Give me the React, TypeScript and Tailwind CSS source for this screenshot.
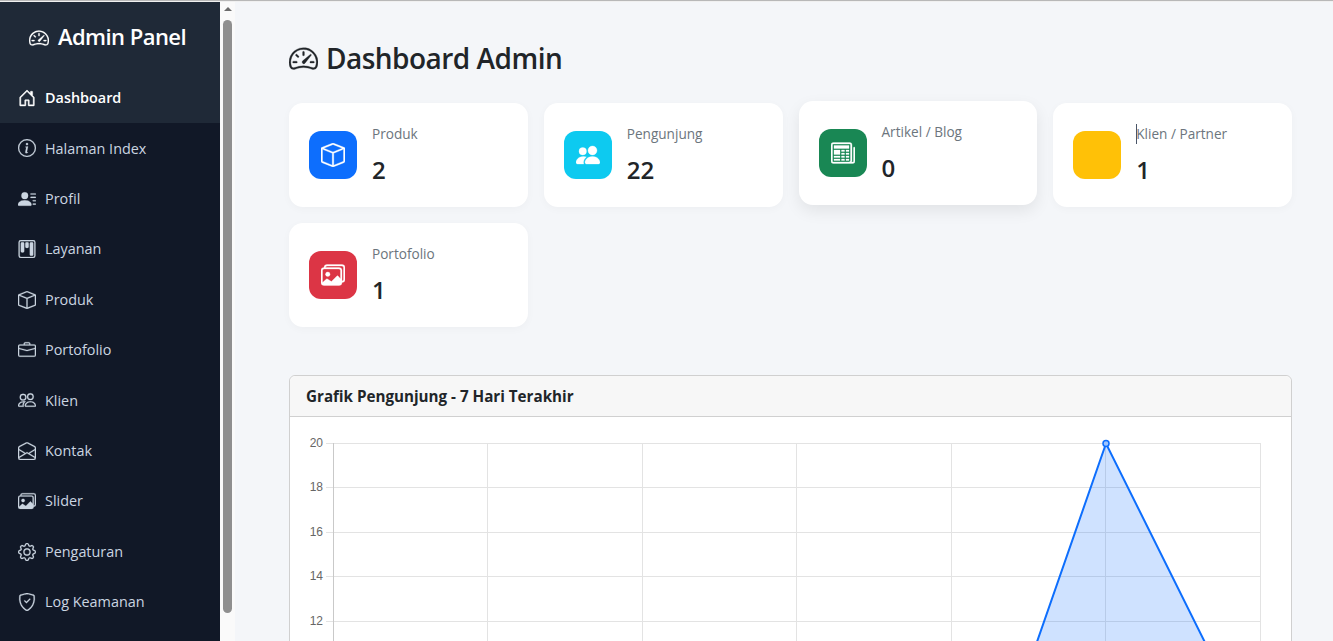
import type { IconType } from "react-icons";
import {
  BsSpeedometer2, BsHouseDoor, BsInfoCircle, BsPersonLinesFill, BsKanban, BsBox,
  BsBriefcase, BsPeople, BsEnvelopeOpen, BsImages, BsGear, BsShieldCheck,
  BsPeopleFill, BsNewspaper,
} from "react-icons/bs";

const menu: { label: string; icon: IconType; active?: boolean }[] = [
  { label: "Dashboard", icon: BsHouseDoor, active: true },
  { label: "Halaman Index", icon: BsInfoCircle },
  { label: "Profil", icon: BsPersonLinesFill },
  { label: "Layanan", icon: BsKanban },
  { label: "Produk", icon: BsBox },
  { label: "Portofolio", icon: BsBriefcase },
  { label: "Klien", icon: BsPeople },
  { label: "Kontak", icon: BsEnvelopeOpen },
  { label: "Slider", icon: BsImages },
  { label: "Pengaturan", icon: BsGear },
  { label: "Log Keamanan", icon: BsShieldCheck },
];

function Sidebar() {
  return (
    <aside className="w-[220px] shrink-0 bg-[#111827] text-[#cbd5e1]">
      <div className="h-[71px] bg-[#1f2937] flex items-start justify-center pt-[19px] pr-[5px] gap-[9px] text-white">
        <BsSpeedometer2 className="w-[20px] h-[20px] mt-[7px] [stroke-width:0.2]" />
        <span className="text-[22px] font-semibold leading-[30px] tracking-[-0.55px]">Admin Panel</span>
      </div>
      {menu.map((item) => (
        <div
          key={item.label}
          className={
            item.active
              ? "h-[50.4px] flex items-center gap-[9px] pl-[18px] pb-[0.2px] bg-[#1f2937] text-white font-semibold text-[14.4px]"
              : "h-[50.4px] flex items-center gap-[9px] pl-[18px] pb-[0.2px] text-[14.4px]"
          }
        >
          <item.icon className={item.active ? "w-[18px] h-[18px] shrink-0 [stroke-width:0.4]" : "w-[18px] h-[18px] shrink-0 [stroke-width:0.2]"} />
          <span>{item.label}</span>
        </div>
      ))}
    </aside>
  );
}

function Scrollbar() {
  return (
    <div className="w-[15px] shrink-0 bg-[#fafafa] flex flex-col items-center pt-[5px]">
      <div className="w-0 h-0 border-x-[4px] border-x-transparent border-b-[4px] border-b-[#6b6b6b]" />
      <div className="w-[9px] h-[593px] mt-[9px] rounded-[5px] bg-[#8f8f8f]" />
    </div>
  );
}

function StatCard({ title, value, color, icon: Icon, hover, caret }: {
  title: string; value: string; color: string; icon?: IconType; hover?: boolean; caret?: boolean;
}) {
  return (
    <div
      className={
        hover
          ? "h-[104px] rounded-[14px] bg-white flex items-center gap-[15px] px-5 -translate-y-[2px] shadow-[0_6px_16px_rgba(0,0,0,0.08)]"
          : "h-[104px] rounded-[14px] bg-white flex items-center gap-[15px] px-5 shadow-[0_2px_8px_rgba(0,0,0,0.03)]"
      }
    >
      <div className={`w-12 h-12 rounded-xl flex items-center justify-center text-white ${color}`}>
        {Icon && <Icon className="w-6 h-6 [stroke-width:0.2]" />}
      </div>
      <div className="relative -mt-[3px]">
        {caret && <span className="absolute left-0 top-0 w-px h-5 bg-[#4a5568]" />}
        <div className="text-[13.6px] leading-[20px] text-[#6c757d]">{title}</div>
        <div className="text-[24px] leading-[29px] font-semibold text-[#212529] mt-[11px]">{value}</div>
      </div>
    </div>
  );
}

function VisitorChart() {
  const xs = [44, 198, 353, 507, 662, 816, 971];
  const ys = [20, 18, 16, 14, 12, 10, 8, 6, 4, 2, 0];
  const yOf = (v: number) => Math.floor(26 + (20 - v) * 22.25) + 0.5;
  return (
    <svg width="1001" height="480" className="block font-['Liberation_Sans',sans-serif]">
      {ys.map((v) => (
        <g key={v}>
          <line x1="36" x2="971" y1={yOf(v)} y2={yOf(v)} stroke="#e3e3e3" />
          {v >= 12 && <text x="33" y={yOf(v) + 3.5} textAnchor="end" fontSize="12" fill="#666">{v}</text>}
        </g>
      ))}
      {xs.map((x, i) => (
        <line key={x} x1={x - 0.5} x2={x - 0.5} y1="26" y2="480" stroke={i === 0 ? "#c9c9c9" : "#e3e3e3"} />
      ))}
      <polygon points="661,472 816,26.5 971,338 971,472" fill="#0d6efd" fillOpacity="0.2" />
      <polyline points="661,472 816,26.5 971,338" fill="none" stroke="#0d6efd" strokeWidth="2" />
      <circle cx="816" cy="26.5" r="3" fill="#9fc5fe" stroke="#0d6efd" strokeWidth="1.5" />
    </svg>
  );
}

export default function App() {
  return (
    <div className="h-screen overflow-hidden flex flex-col bg-white font-['Open_Sans','Liberation_Sans',sans-serif]">
      <div className="h-[1px] shrink-0 bg-[#b8b8b8]" />
      <div className="h-[1px] shrink-0 bg-[#f0f0f0]" />
      <div className="flex-1 flex min-h-0">
        <Sidebar />
        <Scrollbar />
        <main className="flex-1 min-w-0 bg-[#f4f6f9] pl-[54px] pr-[41px] pt-[37px] overflow-hidden">
          <h1 className="flex items-center gap-[8px] text-[28px] leading-[38px] font-semibold text-[#212529] tracking-[-0.52px]">
            <BsSpeedometer2 className="w-[29px] h-[29px] [stroke-width:0.15]" />
            Dashboard Admin
          </h1>
          <div className="grid grid-cols-4 gap-4 mt-[26px]">
            <StatCard title="Produk" value="2" color="bg-[#0d6efd]" icon={BsBox} />
            <StatCard title="Pengunjung" value="22" color="bg-[#0dcaf0]" icon={BsPeopleFill} />
            <StatCard title="Artikel / Blog" value="0" color="bg-[#198754]" icon={BsNewspaper} hover />
            <StatCard title="Klien / Partner" value="1" color="bg-[#ffc107]" caret />
            <StatCard title="Portofolio" value="1" color="bg-[#dc3545]" icon={BsImages} />
          </div>
          <section className="mt-[48px] rounded-[6px] border border-[#d0d0d0] bg-white">
            <div className="h-[41px] flex items-center px-4 bg-[#f7f7f7] border-b border-[#d0d0d0] rounded-t-[6px]">
              <h2 className="text-[15.2px] font-bold text-[#212529]">Grafik Pengunjung - 7 Hari Terakhir</h2>
            </div>
            <VisitorChart />
          </section>
        </main>
      </div>
    </div>
  );
}
